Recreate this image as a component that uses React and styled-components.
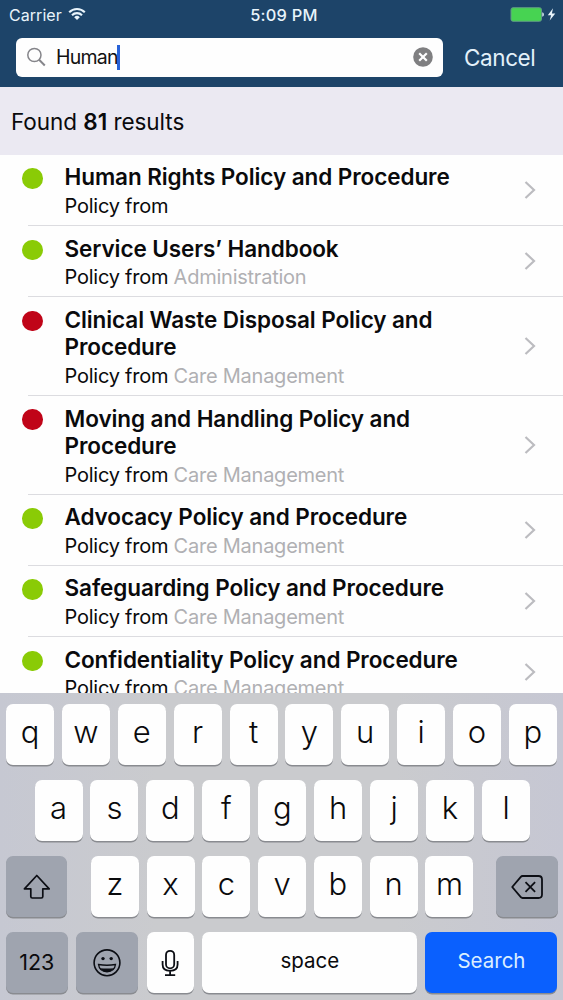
import styled, { createGlobalStyle } from 'styled-components'
import { useState } from 'react'

let GlobalStyle = createGlobalStyle`
  * { box-sizing: border-box; }
  body {
    margin: 0;
    font-family: Inter, 'Liberation Sans', sans-serif;
    color: #0a0a0c;
    background: #fefefe;
  }
`;

let Screen = styled.div`
  width: 563px;
  height: 1000px;
  display: flex;
  flex-direction: column;
  overflow: hidden;
  background: #fefefe;
`;

let TopBar = styled.header`
  flex: none;
  height: 87.3px;
  background: #1d4469;
  color: #e9f4fb;
`;

let StatusBar = styled.div`
  display: grid;
  grid-template-columns: 1fr auto 1fr;
  align-items: center;
  height: 30px;
  padding: 0 7px 0 9px;
  font-size: 16.4px;
`;

let Carrier = styled.div`
  display: flex;
  align-items: center;
  gap: 6px;
  font-size: 16px;
  letter-spacing: 0.05px;
  svg { display: block; margin-top: -2px; }
`;

let Clock = styled.div`
  font-weight: 500;
  letter-spacing: 0.25px;
  padding-left: 3px;
`;

let Power = styled.div`
  display: flex;
  justify-content: flex-end;
  svg { display: block; margin-top: -2px; }
`;

let SearchRow = styled.div`
  display: flex;
  align-items: center;
  padding: 8px 0 0 16px;
`;

let SearchBox = styled.div`
  display: flex;
  align-items: center;
  width: 427px;
  height: 38.5px;
  padding: 0 10px 0 11px;
  border-radius: 6px;
  background: #fefefe;
  color: #111;
  svg { display: block; flex: none; }
`;

let Query = styled.span`
  margin-left: 9px;
  font-size: 19.5px;
  letter-spacing: -0.75px;
`;

let Caret = styled.span`
  width: 2.5px;
  height: 25px;
  margin: 0 auto 0 -0.5px;
  background: #2862d8;
`;

let Cancel = styled.button`
  margin-left: 21px;
  padding: 0;
  border: 0;
  background: none;
  color: #e3f1fa;
  font: 400 22.5px Inter, sans-serif;
  letter-spacing: -0.4px;
`;

let Found = styled.div`
  flex: none;
  height: 67.5px;
  padding: 1px 0 0 11px;
  background: #ebe9f2;
  font-size: 22.5px;
  line-height: 68px;
  letter-spacing: -0.05px;
  b { font-weight: 600; }
`;

let List = styled.div`
  flex: 1;
  min-height: 0;
  overflow: hidden;
`;

let Row = styled.div`
  display: flex;
  padding-left: 22px;
`;

let Dot = styled.i`
  flex: none;
  width: 20.5px;
  height: 20.5px;
  margin: 13.5px 22px 0 0;
  border-radius: 50%;
  background: ${props => props.bg};
`;

let Info = styled.div`
  flex: 1;
  padding-top: 8.7px;
  padding-bottom: 7px;
`;

let Title = styled.div`
  font-size: 22.5px;
  font-weight: 600;
  line-height: 27.3px;
  letter-spacing: -0.08px;
  white-space: pre-line;
`;

let Sub = styled.div`
  margin-top: 3.3px;
  font-size: 20px;
  line-height: 25px;
  letter-spacing: -0.24px;
  span { color: #b0b0b3; }
`;

let Arrow = styled.div`
  display: flex;
  align-items: center;
  padding: 0 27px 1px 0;
`;

let Line = styled.div`
  height: 1px;
  margin: -1px 0 0 28px;
  background: #dcdce0;
`;

let Keyboard = styled.div`
  flex: none;
  height: 307px;
  display: flex;
  flex-direction: column;
  gap: 14.3px;
  padding-top: 10.5px;
  background: linear-gradient(90deg, #c6c8d2 0%, #cacbce 28%, #cacbce 70%, #c6c7d3 100%);
`;

let KeyRow = styled.div`
  display: flex;
  justify-content: space-between;
  height: 61.9px;
  padding: 0 ${props => props.right}px 0 ${props => props.left}px;
`;

let MiddleKeys = styled.div`
  flex: 1;
  display: flex;
  justify-content: space-between;
  padding: 0 22.7px 0 24px;
`;

let Key = styled.button`
  display: flex;
  align-items: center;
  justify-content: center;
  width: ${props => props.w || 48}px;
  height: 61.3px;
  padding: 0 0 ${props => props.lift ?? 5.5}px;
  border: 0;
  border-radius: 7px;
  background: ${props => props.bg || '#fefefe'};
  box-shadow: 0 1.5px 0 #898b90;
  color: ${props => props.color || '#0a0a0c'};
  font: ${props => props.weight || 360} ${props => props.size || 31}px Inter, sans-serif;
  svg { display: block; }
`;

let policies = [
  { title: 'Human Rights Policy and Procedure', from: '', ok: true },
  { title: 'Service Users’ Handbook', from: 'Administration', ok: true },
  { title: 'Clinical Waste Disposal Policy and\nProcedure', from: 'Care Management', ok: false },
  { title: 'Moving and Handling Policy and\nProcedure', from: 'Care Management', ok: false },
  { title: 'Advocacy Policy and Procedure', from: 'Care Management', ok: true },
  { title: 'Safeguarding Policy and Procedure', from: 'Care Management', ok: true },
  { title: 'Confidentiality Policy and Procedure', from: 'Care Management', ok: true },
]

let gray = '#9fa4af'

function WifiIcon(){
  return(
    <svg width="18" height="14" viewBox="0 0 18 14" fill="none" stroke="#e9f4fb" strokeWidth="2.1">
      <path d="M1.2 5.2a11 11 0 0 1 15.6 0" />
      <path d="M4 8.2a7 7 0 0 1 10 0" />
      <path d="M9 13L6.2 10.2a4 4 0 0 1 5.6 0z" fill="#e9f4fb" stroke="none" />
    </svg>
  )
}

function BatteryIcon(){
  return(
    <svg width="46" height="15" viewBox="0 0 46 15">
      <rect x="1" y="0.7" width="30.5" height="13.6" rx="2" fill="#47d352" stroke="#5f9a85" />
      <path d="M32.2 5.3q1.8 .5 1.8 2.2t-1.8 2.2z" fill="#c9dbe6" />
      <path d="M43 1.2L37.8 8.2h3.3L39.7 13.6 45.3 6.4h-3.4z" fill="#e9f4fb" />
    </svg>
  )
}

function PolicyRow(props){
  let { title, from, ok } = props.policy;
  return(
    <>
      <Row>
        <Dot bg={ok ? '#8acb06' : '#c00418'} />
        <Info>
          <Title>{title}</Title>
          <Sub>Policy from <span>{from}</span></Sub>
        </Info>
        <Arrow>
          <svg width="12" height="18" viewBox="0 0 12 18" fill="none" stroke="#bcbcc0" strokeWidth="2.2">
            <path d="M1.5 1L10 9l-8.5 8" />
          </svg>
        </Arrow>
      </Row>
      <Line />
    </>
  )
}

function App(){
  let [query, setQuery] = useState('Human');
  let press = (x)=>{ setQuery(query + x) }
  let letters = (str) => str.split('').map(function(x){
    return <Key key={x} onClick={()=>{press(x)}}>{x}</Key>
  })

  return(
    <Screen>
      <GlobalStyle />
      <TopBar>
        <StatusBar>
          <Carrier>Carrier <WifiIcon /></Carrier>
          <Clock>5:09 PM</Clock>
          <Power><BatteryIcon /></Power>
        </StatusBar>
        <SearchRow>
          <SearchBox>
            <svg width="20" height="20" viewBox="0 0 20 20" fill="none" stroke="#85858a" strokeWidth="1.5">
              <circle cx="7.4" cy="8" r="6.6" />
              <path d="M12.1 12.8L17.8 18.5" strokeWidth="2" />
            </svg>
            <Query>{query}</Query>
            <Caret />
            <svg width="20" height="20" viewBox="0 0 20 20" onClick={()=>{setQuery('')}}>
              <circle cx="10" cy="10" r="9.8" fill="#7f7f81" />
              <path d="M6.2 6.2l7.6 7.6M13.8 6.2l-7.6 7.6" stroke="#fefefe" strokeWidth="2.2" />
            </svg>
          </SearchBox>
          <Cancel>Cancel</Cancel>
        </SearchRow>
      </TopBar>
      <Found>Found <b>81</b> results</Found>
      <List>
        {
          policies.map(function(x, i){
            return <PolicyRow policy={x} key={i} />
          })
        }
      </List>
      <Keyboard>
        <KeyRow left={6} right={6}>{letters('qwertyuiop')}</KeyRow>
        <KeyRow left={34.5} right={33}>{letters('asdfghjkl')}</KeyRow>
        <KeyRow left={5.5} right={5.5}>
          <Key w={61.3} bg={gray} lift={0}>
            <svg width="28" height="26" viewBox="0 0 28 26" fill="none" stroke="#0c0e14" strokeWidth="1.7" strokeLinejoin="round">
              <path d="M14.8 1.5L27.2 14.8H20.8V22.5Q20.8 24 19.3 24H10.3Q8.8 24 8.8 22.5V14.8H2.4Z" />
            </svg>
          </Key>
          <MiddleKeys>{letters('zxcvbnm')}</MiddleKeys>
          <Key w={61.3} bg={gray} lift={0} onClick={()=>{setQuery(query.slice(0, -1))}}>
            <svg width="32" height="24" viewBox="0 0 32 24" fill="none" stroke="#0c0e14" strokeWidth="1.8" strokeLinejoin="round">
              <path d="M11.5 1H27.5Q31 1 31 4.5V19.5Q31 23 27.5 23H11.5Q10.5 23 9.8 22.2L1.2 12L9.8 1.8Q10.5 1 11.5 1Z" />
              <path d="M14.5 7.2l9.6 9.6M24.1 7.2l-9.6 9.6" />
            </svg>
          </Key>
        </KeyRow>
        <KeyRow left={5.5} right={5.5}>
          <Key w={62.5} bg={gray} size={21.5} weight={380} lift={1}>123</Key>
          <Key w={62} bg={gray} lift={0}>
            <svg width="28" height="28" viewBox="0 0 28 28" fill="none" stroke="#0c0e14" strokeWidth="1.6">
              <circle cx="14" cy="13.8" r="12.9" />
              <circle cx="10" cy="9.6" r="1.7" fill="#0c0e14" stroke="none" />
              <circle cx="18.2" cy="9.6" r="1.7" fill="#0c0e14" stroke="none" />
              <path d="M5.5 15.5Q14 17 22.5 15.5Q21.5 22.8 14 22.8T5.5 15.5Z" strokeWidth="1.3" />
              <path d="M7 19.2Q14 20 21 19.2Q18.5 23 14 23T7 19.2Z" fill="#0c0e14" stroke="none" />
            </svg>
          </Key>
          <Key w={47.7} lift={0}>
            <svg width="18" height="28" viewBox="0 0 18 28" fill="none" stroke="#0c0e14" strokeWidth="1.8">
              <rect x="5" y="1.8" width="8.2" height="17.5" rx="4.1" />
              <path d="M1.6 12V15.5Q1.6 21.8 9.1 21.8T16.6 15.5V12M9.1 21.8V26M4 26.2H14.2" />
            </svg>
          </Key>
          <Key w={214.8} size={20.5} weight={400} lift={4} onClick={()=>{press(' ')}}>space</Key>
          <Key w={132} size={20.5} weight={400} lift={4} bg="#0a60fe" color="#dbeeff">Search</Key>
        </KeyRow>
      </Keyboard>
    </Screen>
  )
}
export default App
